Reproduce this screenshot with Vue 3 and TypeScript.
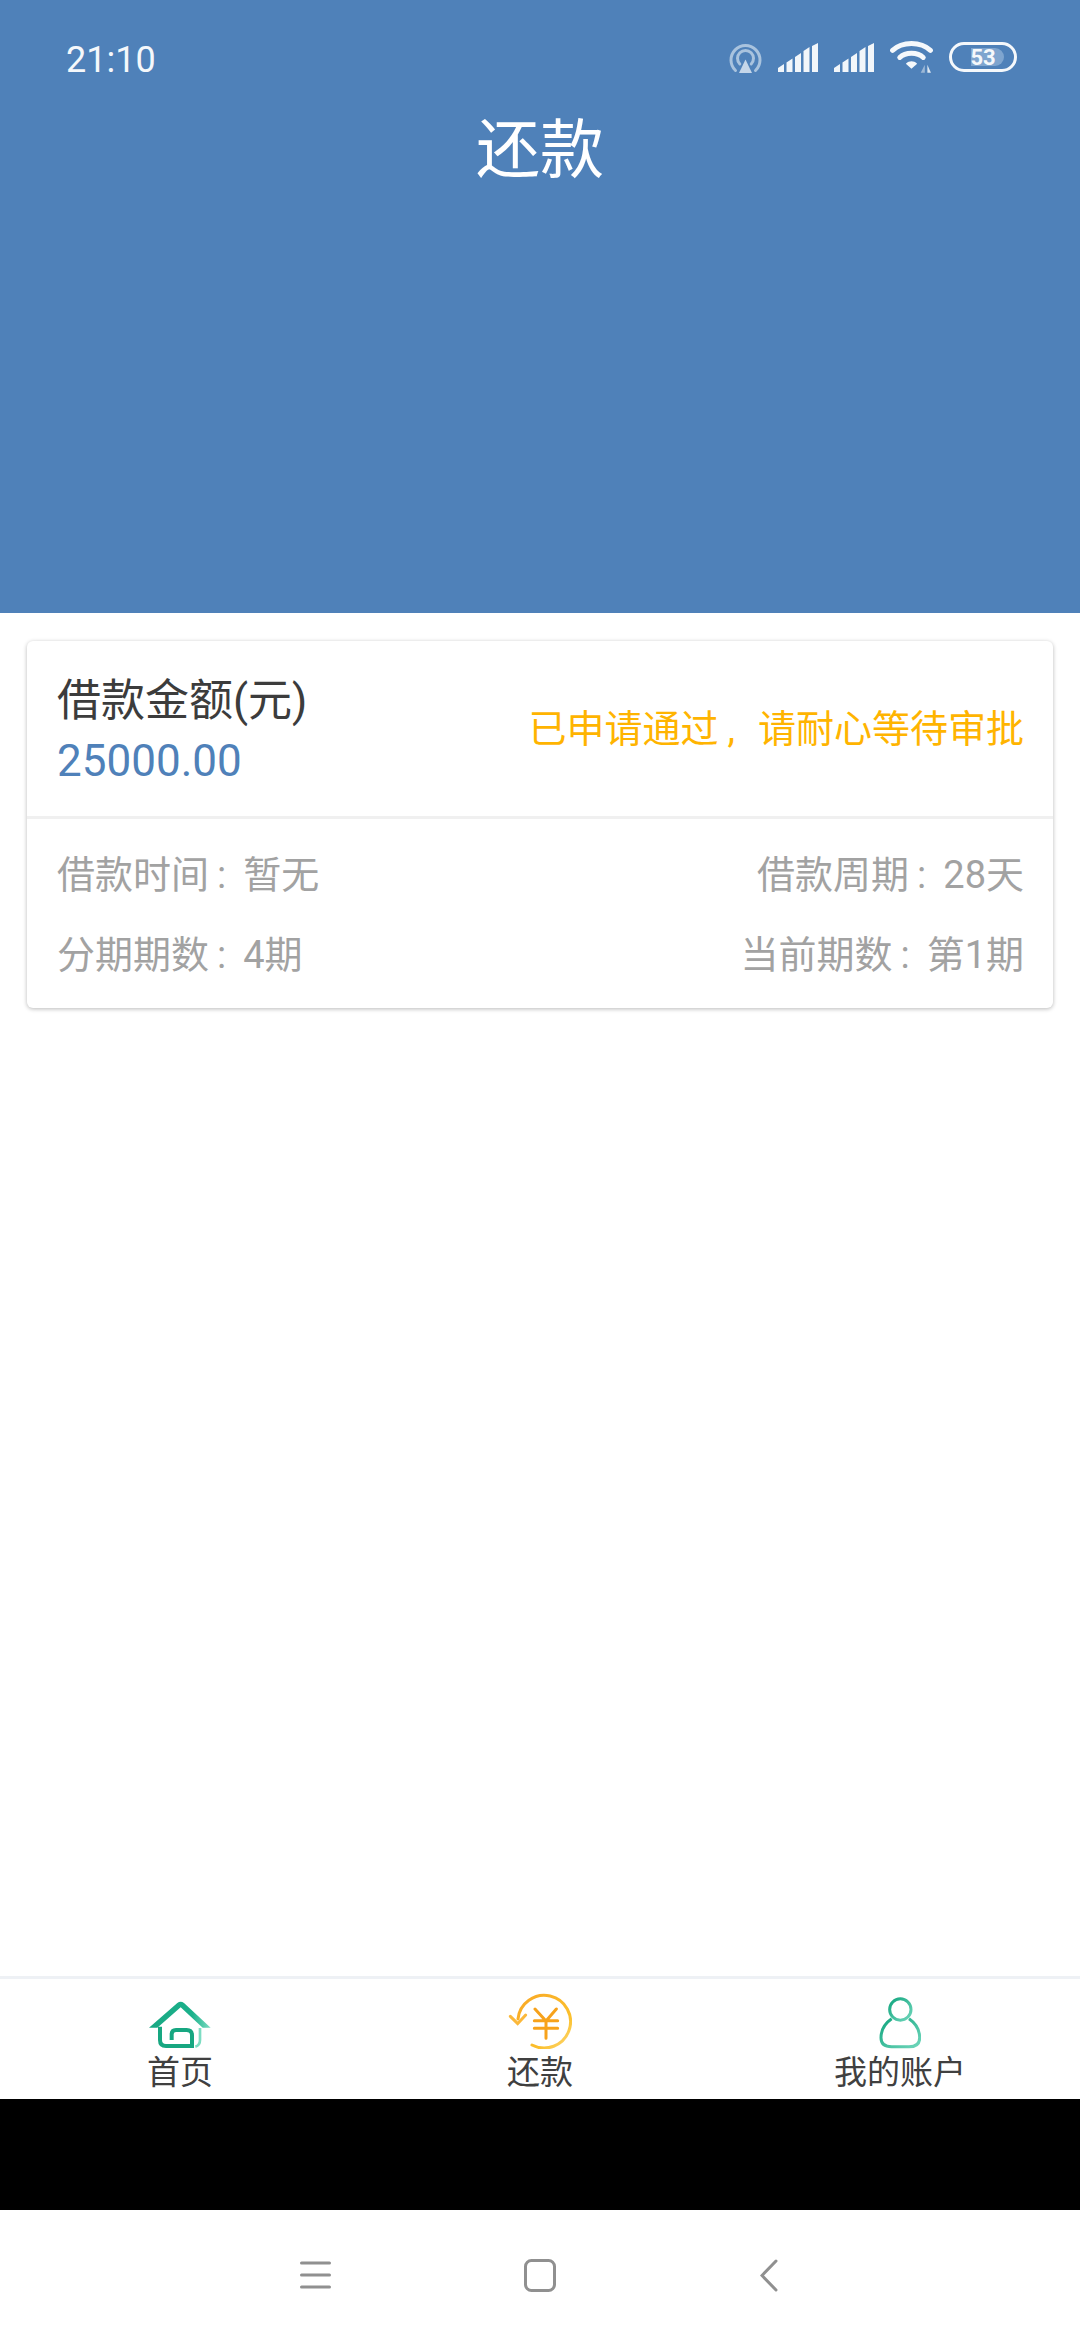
<script setup lang="ts">
const tabs = [
  { key: 'home', label: '首页' },
  { key: 'repay', label: '还款' },
  { key: 'account', label: '我的账户' }
]
</script>

<template>
  <div class="page">
    <header class="header">
      <div class="status-bar">
        <span class="time">21:10</span>
        <div class="status-icons">
          <svg class="ic-hotspot" width="33" height="31" viewBox="0 0 33 31">
            <path d="M6.500 28.500A14.500 14.500 0 1 1 26.500 28.500" fill="none" stroke="#a9c3de" stroke-width="3" stroke-linecap="round" />
            <path d="M10.800 22A8 8 0 1 1 22.200 22" fill="none" stroke="#a9c3de" stroke-width="3" stroke-linecap="round" />
            <path d="M16.500 17.500L23 31H10Z" fill="#c5d6e9" />
          </svg>
          <svg v-for="n in 2" :key="n" class="ic-signal" width="40" height="29" viewBox="0 0 40 29">
            <path d="M0 25L6 21V29H0ZM8.500 19.500L14.500 15.500V29H8.500ZM17 14L23 10V29H17ZM25.500 8L31.500 4V29H25.500ZM34 3L40 0V29H34Z" fill="#f2f6fa" />
          </svg>
          <svg class="ic-wifi" width="43" height="34" viewBox="0 0 42 33">
            <path d="M2.500 10C12 1 30 1 39.500 10" fill="none" stroke="#f5f8fb" stroke-width="4.800" stroke-linecap="round" />
            <path d="M9.500 17C15 11.500 27 11.500 32.500 17" fill="none" stroke="#f5f8fb" stroke-width="4.800" stroke-linecap="round" />
            <path d="M15.500 23C19 20 23 20 26.500 23L21 28Z" fill="#f5f8fb" />
            <path d="M34 24V32H30Z" fill="#9db8d6" />
            <path d="M36.500 24V32H40Z" fill="#dde7f1" />
          </svg>
          <div class="battery">
            <div class="battery-fill"></div>
            <span class="battery-num">53</span>
          </div>
        </div>
      </div>
      <h1 class="title">还款</h1>
    </header>

    <main class="main">
      <section class="card">
        <div class="card-top">
          <div class="amount-box">
            <div class="amount-label">借款金额(元)</div>
            <div class="amount">25000.00</div>
          </div>
          <div class="state">已申请通过<span class="comma">,</span>请耐心等待审批</div>
        </div>
        <div class="card-bottom">
          <div class="row">
            <span>借款时间<span class="colon">:</span>暂无</span>
            <span>借款周期<span class="colon">:</span>28天</span>
          </div>
          <div class="row">
            <span>分期期数<span class="colon">:</span>4期</span>
            <span>当前期数<span class="colon">:</span>第1期</span>
          </div>
        </div>
      </section>
    </main>

    <nav class="tabbar">
      <div v-for="tab in tabs" :key="tab.key" class="tab">
        <svg v-if="tab.key === 'home'" class="tab-icon" width="62" height="48" viewBox="85 95 186 144">
          <defs>
            <linearGradient id="homeGrad" x1="0" y1="0" x2="1" y2="0">
              <stop offset="0" stop-color="#19a883" />
              <stop offset="0.7" stop-color="#1bb18b" />
              <stop offset="1" stop-color="#7ddcc2" />
            </linearGradient>
          </defs>
          <path d="M85 175L170 101Q180 93 190 101L270 175H246L180 114L110 175Z" fill="url(#homeGrad)" />
          <path d="M118 172V212Q118 230 136 230H214V198Q214 182 198 182H166Q153 182 153 195V212" fill="none" stroke="#17a781" stroke-width="12" />
          <path d="M238 176V212Q238 228 224 232" fill="none" stroke="#7ddcc2" stroke-width="8" />
        </svg>
        <svg v-else-if="tab.key === 'repay'" class="tab-icon" width="64" height="56" viewBox="83 62 192 168">
          <defs>
            <linearGradient id="repayGrad" x1="0" y1="0" x2="1" y2="1">
              <stop offset="0" stop-color="#f9a825" />
              <stop offset="0.7" stop-color="#fbc02d" />
              <stop offset="1" stop-color="#fdd978" />
            </linearGradient>
          </defs>
          <path d="M113 140A79 79 0 1 1 155 218" fill="none" stroke="url(#repayGrad)" stroke-width="9" stroke-linecap="round" />
          <path d="M90 132L112 154L136 128" fill="none" stroke="#fbb83a" stroke-width="9" stroke-linecap="round" />
          <path d="M164 110L197 146L228 110M162 145H232M162 168H232M197 146V198" fill="none" stroke="#f7a21b" stroke-width="9" stroke-linecap="round" />
        </svg>
        <svg v-else class="tab-icon" width="42" height="53" viewBox="174 80 126 158">
          <defs>
            <linearGradient id="userGrad" x1="0" y1="0" x2="1" y2="1">
              <stop offset="0" stop-color="#13a67f" />
              <stop offset="1" stop-color="#6fd6bb" />
            </linearGradient>
          </defs>
          <circle cx="238" cy="120" r="32" fill="none" stroke="url(#userGrad)" stroke-width="9" />
          <path d="M212 148Q180 170 180 205Q180 232 212 232H264Q296 232 296 205Q296 170 264 148" fill="none" stroke="url(#userGrad)" stroke-width="9" />
        </svg>
        <span class="tab-label">{{ tab.label }}</span>
      </div>
    </nav>

    <div class="black-bar"></div>

    <div class="nav-bar">
      <svg class="nav-menu" width="31" height="28" viewBox="0 0 31 28">
        <path d="M1.500 2H29.500M1.500 14H29.500M1.500 26H29.500" stroke="#909090" stroke-width="3" stroke-linecap="round" />
      </svg>
      <svg class="nav-home" width="32" height="33" viewBox="0 0 32 33">
        <rect x="1.500" y="1.500" width="29" height="30" rx="6" fill="none" stroke="#909090" stroke-width="3" />
      </svg>
      <svg class="nav-back" width="18" height="33" viewBox="0 0 18 33">
        <path d="M16 2L2 16.500L16 31" fill="none" stroke="#909090" stroke-width="3" stroke-linecap="round" />
      </svg>
    </div>
  </div>
</template>

<style scoped>
.page {
  width: 1080px;
  height: 2340px;
  display: flex;
  flex-direction: column;
  background: #fff;
  font-family: Roboto, "Noto Sans CJK SC", sans-serif;
  overflow: hidden;
}

.header {
  height: 613px;
  flex: none;
  background: #4f81b9;
  color: #fff;
}

.status-bar {
  display: flex;
  align-items: center;
  justify-content: space-between;
  padding: 38px 63px 0 66px;
  height: 44px;
}

.time {
  font-size: 36px;
  line-height: 44px;
  color: #f5f8fb;
}

.status-icons {
  display: flex;
  align-items: center;
  gap: 16px;
  margin-top: -6px;
}

.battery {
  position: relative;
  width: 68px;
  height: 30px;
  box-sizing: border-box;
  border: 3px solid #f5f8fb;
  border-radius: 15px;
  overflow: hidden;
  display: flex;
  align-items: center;
  justify-content: center;
}

.battery-fill {
  position: absolute;
  left: 3px;
  top: 3px;
  bottom: 3px;
  width: 53%;
  margin-left: 16px;
  background: #7fa5cf;
  border-radius: 0 10px 10px 0;
}

.battery-num {
  position: relative;
  font-size: 22px;
  font-weight: 700;
  line-height: 23px;
  color: #f5f8fb;
}

.title {
  margin: 27px 0 0;
  font-size: 64px;
  font-weight: 400;
  line-height: 84px;
  text-align: center;
}

.main {
  flex: 1;
  padding: 28px 27px 0;
}

.card {
  border-radius: 6px;
  background: #fff;
  box-shadow: 0 1px 4px rgba(0, 0, 0, 0.28);
}

.card-top {
  height: 178px;
  padding: 0 29px 0 30px;
  box-sizing: border-box;
  display: flex;
  justify-content: space-between;
  align-items: center;
  border-bottom: 3px solid #f0f0f0;
}

.amount-box {
  margin-top: 6px;
}

.amount-label {
  font-size: 44px;
  line-height: 58px;
  color: #3c3c3c;
}

.amount {
  font-size: 44px;
  line-height: 62px;
  color: #4f81b9;
}

.state {
  font-size: 38px;
  line-height: 50px;
  color: #ffb400;
}

.comma {
  padding: 0 23px 0 9px;
}

.card-bottom {
  padding: 31px 29px 28px 30px;
}

.row {
  display: flex;
  justify-content: space-between;
  font-size: 38px;
  line-height: 50px;
  color: #a2a2a2;
  margin-bottom: 30px;
}

.row:last-child {
  margin-bottom: 0;
}

.colon {
  padding: 0 17px 0 8px;
}

.tabbar {
  flex: none;
  height: 123px;
  box-sizing: border-box;
  border-top: 3px solid #eef1f5;
  display: flex;
}

.tab {
  flex: 1;
  display: flex;
  flex-direction: column;
  align-items: center;
  justify-content: flex-end;
  height: 120px;
  padding-bottom: 8px;
  box-sizing: border-box;
}

.tab-icon {
  display: block;
  flex: none;
}

.tab-label {
  font-size: 33px;
  line-height: 36px;
  margin-top: 6px;
  color: #404040;
}

.black-bar {
  flex: none;
  height: 111px;
  background: #000;
}

.nav-bar {
  flex: none;
  height: 130px;
  display: flex;
  align-items: center;
  justify-content: center;
  background: #fff;
}

.nav-menu {
  margin-right: 193px;
  margin-left: -3px;
}

.nav-back {
  margin-left: 204px;
}
</style>
